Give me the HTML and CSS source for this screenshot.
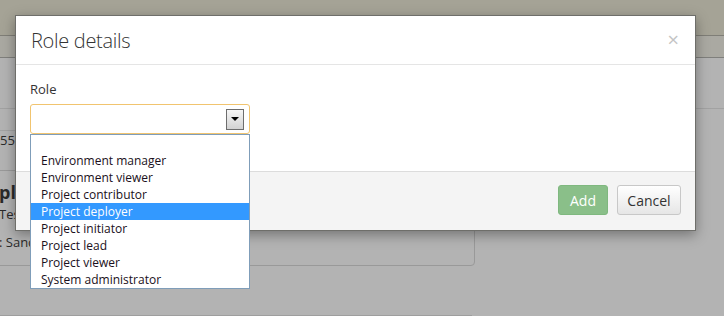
FILE: index.html
```html
<!DOCTYPE html>
<html>
<head>
<meta charset="utf-8">
<link rel="stylesheet" href="styles.css">
</head>
<body>
<div class="page">
  <div class="topbar"></div>
  <div class="navbar"></div>
  <div class="content">
    <div class="filters"></div>
    <div class="field">55.</div>
    <div class="card">
      <div class="card-title">pl</div>
      <div class="card-line">Tes</div>
      <div class="card-line">: Sand</div>
    </div>
    <div class="card2"></div>
  </div>
</div>

<div class="modal">
  <div class="modal-header">
    <h4 class="modal-title">Role details</h4>
    <span class="close">×</span>
  </div>
  <div class="modal-body">
    <label class="label">Role</label>
    <div class="select-wrap">
      <div class="select">
        <span class="select-btn"><span class="tri"></span></span>
      </div>
      <ul class="options">
        <li class="opt">&nbsp;</li>
        <li class="opt">Environment manager</li>
        <li class="opt">Environment viewer</li>
        <li class="opt">Project contributor</li>
        <li class="opt sel">Project deployer</li>
        <li class="opt">Project initiator</li>
        <li class="opt">Project lead</li>
        <li class="opt">Project viewer</li>
        <li class="opt">System administrator</li>
      </ul>
    </div>
  </div>
  <div class="modal-footer">
    <button class="btn btn-add">Add</button>
    <button class="btn btn-cancel">Cancel</button>
  </div>
</div>
</body>
</html>
```
FILE: styles.css
```css
* { box-sizing: border-box; }
html, body { margin: 0; padding: 0; }
body {
  width: 724px;
  height: 316px;
  overflow: hidden;
  background: #b3b3b3;
  font-family: "Open Sans", "Segoe UI", sans-serif;
  color: #333;
  position: relative;
}

/* background page (already dimmed by the backdrop) */
.page { width: 724px; height: 316px; overflow: hidden; }
.topbar {
  height: 36px;
  background: #a5a396;
  border-bottom: 1px solid #7f7e77;
}
.navbar {
  height: 22px;
  background: #aaa9a2;
  border-bottom: 1px solid #7f7f7c;
}
.filters {
  height: 51px;
  border-bottom: 1px solid #a2a2a2;
}
.field {
  margin-top: 21px;
  width: 480px;
  height: 20px;
  border-top: 1px solid #a2a2a2;
  font-size: 13px;
  line-height: 18px;
  color: #2a2a2a;
}
.card {
  margin-top: 20px;
  margin-left: -20px;
  width: 495px;
  height: 96px;
  border: 1px solid #999;
  border-radius: 4px;
  padding: 11px 0 0 18px;
  color: #2a2a2a;
}
.card-title { font-size: 18px; font-weight: 700; line-height: 20px; margin-bottom: 3px; }
.card-line { font-size: 13px; line-height: 18px; margin-bottom: 10px; }
.card2 {
  margin-top: 49px;
  width: 472px;
  height: 1px;
  border-top: 1px solid #9e9e9e;
}

/* modal */
.modal {
  position: absolute;
  left: 15px;
  top: 15px;
  width: 681px;
  background: #fff;
  border: 1px solid #6e6e6a;
  box-shadow: 0 4px 12px rgba(0, 0, 0, 0.35);
}
.modal-header {
  height: 49px;
  border-bottom: 1px solid #e5e5e5;
  padding: 0 15px;
  display: flex;
  align-items: center;
  justify-content: space-between;
}
.modal-title {
  margin: 0;
  font-size: 20px;
  font-weight: 300;
  color: #333;
  letter-spacing: -0.3px;
}
.close {
  font-size: 20px;
  color: #c4c4c4;
  margin-right: 1px;
  line-height: 20px;
}
.modal-body {
  padding: 15px 15px 37px 14px;
}
.label {
  display: block;
  font-size: 13px;
  line-height: 18px;
  margin-bottom: 6px;
  color: #333;
}
.select-wrap { position: relative; width: 220px; height: 30px; }
.select {
  height: 30px;
  border: 1px solid #f1c46f;
  border-radius: 3px;
  display: flex;
  justify-content: flex-end;
  align-items: center;
  padding-right: 5px;
}
.select-btn {
  width: 18px;
  height: 21px;
  border: 1px solid #6d6d6d;
  background: linear-gradient(#f6f6f6, #d2d2d2);
  display: flex;
  align-items: center;
  justify-content: center;
}
.tri {
  width: 0; height: 0;
  border-left: 4px solid transparent;
  border-right: 4px solid transparent;
  border-top: 4px solid #000;
}
.options {
  position: absolute;
  left: 0;
  top: 30px;
  width: 220px;
  margin: 0;
  padding: 0;
  list-style: none;
  background: #fff;
  border: 1px solid #7f9db9;
  z-index: 2;
}
.opt {
  height: 17px;
  line-height: 17px;
  font-size: 12px;
  padding-left: 10px;
  color: #1a1020;
  white-space: nowrap;
}
.opt.sel { background: #3399ff; color: #fff; }

.modal-footer {
  background: #f4f4f4;
  border-top: 1px solid #dcdcdc;
  padding: 13px 14px 15px;
  display: flex;
  justify-content: flex-end;
  gap: 9px;
}
.btn {
  height: 30px;
  font-family: "Open Sans", "Segoe UI", sans-serif;
  font-size: 14px;
  border-radius: 3px;
  padding: 0;
  margin: 0;
}
.btn-add {
  width: 50px;
  background: #8abf89;
  border: 1px solid #7fb87f;
  color: #fff;
}
.btn-cancel {
  width: 64px;
  background: linear-gradient(#ffffff, #e6e6e6);
  border: 1px solid #c8c8c8;
  color: #333;
}
```
